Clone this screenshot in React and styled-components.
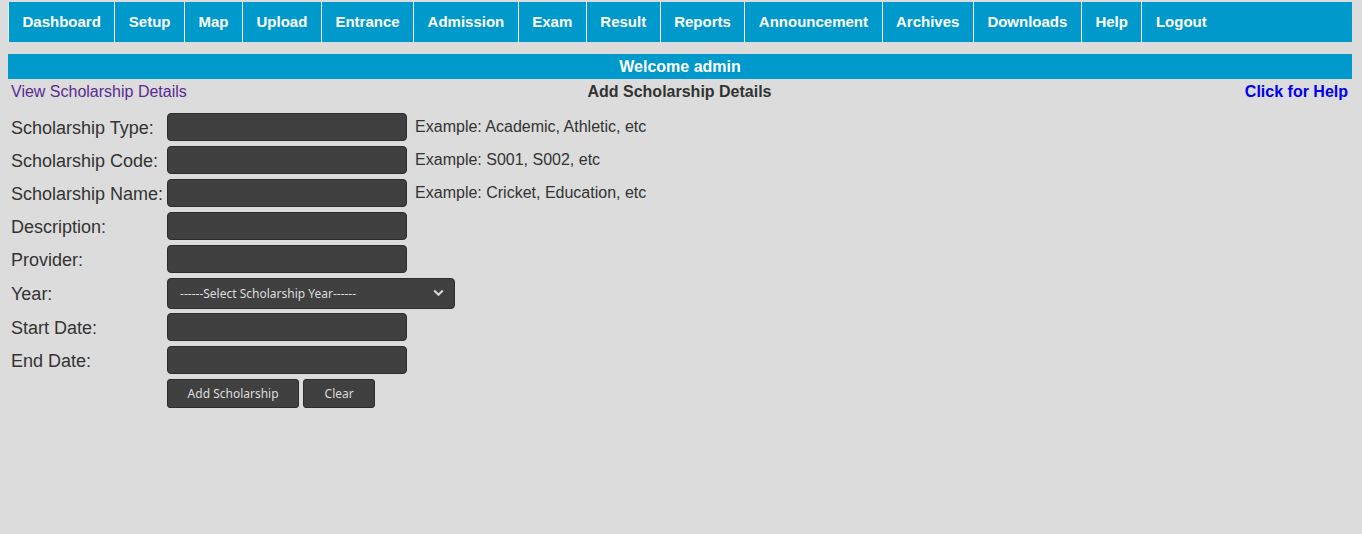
import React from "react";
import styled, { createGlobalStyle } from "styled-components";

const Global = createGlobalStyle`
  html, body { margin: 0; padding: 0; background: #dcdcdc; }
  body { font-family: "Liberation Sans", Arial, sans-serif; color: #333; }
`;

const Page = styled.div`
  padding: 2px 10px 0 8px;
  min-height: 532px;
`;

const NavBar = styled.ul`
  display: flex;
  margin: 0;
  padding: 0;
  list-style: none;
  height: 40px;
  background: #0099cc;
`;

const NavItem = styled.li`
  display: flex;
  align-items: center;
  padding: 0 13.5px 1px;
  border-left: 1px solid ${(p) => (p.$first ? "#e6eef2" : "#ffffff")};
  color: #fff;
  font-weight: bold;
  font-size: 15px;
  white-space: nowrap;
  cursor: pointer;
`;

const Welcome = styled.div`
  margin-top: 12px;
  height: 25px;
  line-height: 25px;
  background: #0099cc;
  color: #fff;
  font-weight: bold;
  font-size: 16px;
  text-align: center;
`;

const HeaderRow = styled.div`
  display: grid;
  grid-template-columns: 1fr auto 1fr;
  align-items: center;
  height: 22px;
  padding: 2px 4px 0 3px;
  font-size: 16px;
`;

const Link = styled.a`
  color: ${(p) => p.$color};
  font-weight: ${(p) => (p.$bold ? "bold" : "normal")};
  text-decoration: none;
  justify-self: ${(p) => p.$align || "start"};
`;

const Title = styled.div`
  font-weight: bold;
  color: #333;
`;

const Form = styled.div`
  display: grid;
  grid-template-columns: max-content 240px 1fr;
  column-gap: 4px;
  row-gap: 5px;
  align-items: center;
  margin-top: 10px;
  padding-left: 3px;
`;

const Label = styled.label`
  font-size: 18px;
  color: #333;
  white-space: nowrap;
  padding-top: 2px;
`;

const Input = styled.input`
  box-sizing: border-box;
  width: 240px;
  height: 28px;
  background: #404040;
  border: 1px solid #2c2c2c;
  border-radius: 4px;
  color: #ddd;
  padding: 0 8px;
  outline: none;
`;

const Hint = styled.span`
  font-size: 16px;
  color: #333;
  margin-left: 4px;
  white-space: nowrap;
`;

const SelectWrap = styled.div`
  grid-column: 2 / span 2;
  position: relative;
  width: 288px;
  height: 30px;
`;

const Select = styled.select`
  appearance: none;
  box-sizing: border-box;
  width: 288px;
  height: 31px;
  background: #404040;
  border: 1px solid #2c2c2c;
  border-radius: 4px;
  color: #ddd;
  font-family: "Noto Sans", "Open Sans", sans-serif;
  font-size: 12px;
  padding: 0 12px;
  outline: none;
`;

const Chevron = styled.svg`
  position: absolute;
  right: 11px;
  top: 11px;
  pointer-events: none;
`;

const Buttons = styled.div`
  grid-column: 2 / span 2;
  display: flex;
  gap: 4px;
`;

const Button = styled.button`
  box-sizing: border-box;
  height: 29px;
  padding: 0 ${(p) => p.$pad || 19.5}px;
  background: #404040;
  border: 1px solid #2c2c2c;
  border-radius: 3px;
  color: #ddd;
  font-family: "Noto Sans", "Open Sans", sans-serif;
  font-size: 12px;
  cursor: pointer;
`;

const navItems = [
  "Dashboard", "Setup", "Map", "Upload", "Entrance", "Admission", "Exam",
  "Result", "Reports", "Announcement", "Archives", "Downloads", "Help", "Logout",
];

const fields = [
  { label: "Scholarship Type:", hint: "Example: Academic, Athletic, etc" },
  { label: "Scholarship Code:", hint: "Example: S001, S002, etc" },
  { label: "Scholarship Name:", hint: "Example: Cricket, Education, etc" },
  { label: "Description:" },
  { label: "Provider:" },
];

const dates = ["Start Date:", "End Date:"];

export default function App() {
  return (
    <Page>
      <Global />
      <NavBar>
        {navItems.map((n, i) => (
          <NavItem key={n} $first={i === 0}>{n}</NavItem>
        ))}
      </NavBar>
      <Welcome>Welcome admin</Welcome>
      <HeaderRow>
        <Link href="#" $color="#5b2a8f">View Scholarship Details</Link>
        <Title>Add Scholarship Details</Title>
        <Link href="#" $color="#0000ee" $bold $align="end">Click for Help</Link>
      </HeaderRow>
      <Form>
        {fields.map((f) => (
          <React.Fragment key={f.label}>
            <Label>{f.label}</Label>
            <Input type="text" />
            {f.hint ? <Hint>{f.hint}</Hint> : <span />}
          </React.Fragment>
        ))}
        <Label>Year:</Label>
        <SelectWrap>
          <Select defaultValue="">
            <option value="">------Select Scholarship Year------</option>
          </Select>
          <Chevron width="11" height="8" viewBox="0 0 11 8">
            <path d="M1.2 1.5 L5.5 5.8 L9.8 1.5" fill="none" stroke="#d8d8d8" strokeWidth="2" />
          </Chevron>
        </SelectWrap>
        {dates.map((d) => (
          <React.Fragment key={d}>
            <Label>{d}</Label>
            <Input type="text" />
            <span />
          </React.Fragment>
        ))}
        <span />
        <Buttons>
          <Button>Add Scholarship</Button>
          <Button $pad={20.5}>Clear</Button>
        </Buttons>
      </Form>
    </Page>
  );
}
